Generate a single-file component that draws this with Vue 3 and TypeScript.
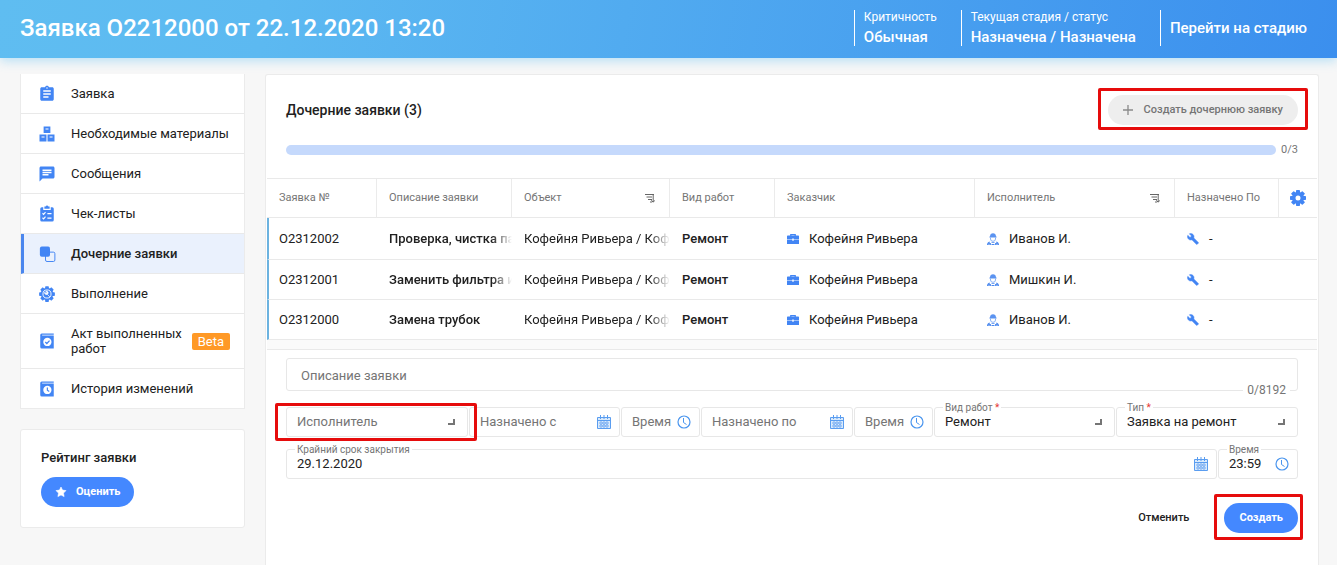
<script setup lang="ts">
import { ref } from 'vue'

type IconName =
  | 'assignment'
  | 'boxes'
  | 'chat'
  | 'checklist'
  | 'layers'
  | 'process'
  | 'act'
  | 'history'

interface MenuItem {
  icon: IconName
  label: string
  active?: boolean
  badge?: string
}

interface ChildRequest {
  number: string
  description: string
  site: string
  kind: string
  customer: string
  executor: string
  due: string
}

const menu: MenuItem[] = [
  { icon: 'assignment', label: 'Заявка' },
  { icon: 'boxes', label: 'Необходимые материалы' },
  { icon: 'chat', label: 'Сообщения' },
  { icon: 'checklist', label: 'Чек-листы' },
  { icon: 'layers', label: 'Дочерние заявки', active: true },
  { icon: 'process', label: 'Выполнение' },
  { icon: 'act', label: 'Акт выполненных работ', badge: 'Beta' },
  { icon: 'history', label: 'История изменений' },
]

const requests: ChildRequest[] = [
  { number: 'О2312002', description: 'Проверка, чистка па', site: 'Кофейня Ривьера / Коф', kind: 'Ремонт', customer: 'Кофейня Ривьера', executor: 'Иванов И.', due: '-' },
  { number: 'О2312001', description: 'Заменить фильтра и', site: 'Кофейня Ривьера / Коф', kind: 'Ремонт', customer: 'Кофейня Ривьера', executor: 'Мишкин И.', due: '-' },
  { number: 'О2312000', description: 'Замена трубок', site: 'Кофейня Ривьера / Коф', kind: 'Ремонт', customer: 'Кофейня Ривьера', executor: 'Иванов И.', due: '-' },
]

const teeth = [0, 45, 90, 135, 180, 225, 270, 315]

const description = ref('')
const executor = ref('')
const startDate = ref('')
const startTime = ref('')
const endDate = ref('')
const endTime = ref('')
const workKind = ref('Ремонт')
const requestType = ref('Заявка на ремонт')
const deadlineDate = ref('29.12.2020')
const deadlineTime = ref('23:59')
</script>

<template>
  <svg class="sprite" aria-hidden="true">
    <symbol id="calendar" viewBox="0 0 14 14">
      <path d="M.5 2.500h13v11H.5z" fill="#d9eafc" stroke="#5a9df0" />
      <path d="M1 5.500h12M3.500 0v4M7 0v4M10.500 0v4" stroke="#5a9df0" fill="none" />
      <path d="M3 7h2v2H3zM6 7h2v2H6zM9 7h2v2H9zM3 10h2v2H3zM6 10h2v2H6zM9 10h2v2H9z" fill="#fff" stroke="#5a9df0" stroke-width=".8" />
    </symbol>
    <symbol id="clock" viewBox="0 0 14 14">
      <circle cx="7" cy="7" r="6" fill="none" stroke="#4a95ee" stroke-width="1.200" />
      <path d="M6.500 3v4.500l3 2" fill="none" stroke="#4a95ee" />
    </symbol>
    <symbol id="sort" viewBox="0 0 10 10">
      <path d="M0 1.500h9M1.500 4h5.500M3 6.500h4M5 9h2M8.200 1.500V9M6.300 7.300L8.200 9.200l1.700-1.900" fill="none" stroke="#666" />
    </symbol>
    <symbol id="briefcase" viewBox="0 0 12 10">
      <path d="M3.800 2V.7h4.400V2" fill="none" stroke="#4285f4" stroke-width="1.300" />
      <path d="M.7 1.500h10.600q.7 0 .7.700V5.400H6.700V4.600H5.300v.8H0V2.200Q0 1.500.7 1.500zM0 6h5.300v.8h1.400V6H12v4H0z" fill="#4285f4" />
    </symbol>
    <symbol id="worker" viewBox="0 0 12 12">
      <path d="M3 3.500C3 1.300 4.300.2 6 .2s3 1.100 3 3.300h.6v1H2.400v-1z" fill="#5b93f0" />
      <path d="M3.500 4.500V6q0 2.300 2.500 2.300T8.500 6V4.500" fill="none" stroke="#7ba9f4" stroke-width=".9" />
      <path d="M0 12q0-3 2.700-3.500V10h1.200v2H2.300v-1.200h-.6V12zM12 12q0-3-2.700-3.500V10H8.100v2h1.600v-1.200h.6V12zM4.500 9.200h3V10h-3zM4.500 11h3v1h-3z" fill="#4a88ee" />
    </symbol>
    <symbol id="wrench" viewBox="0 0 24 24">
      <path fill="#4285f4" stroke="#4285f4" d="M22.700 19l-9.100-9.100c.9-2.300.4-5-1.500-6.900-2-2-5-2.400-7.400-1.300L9 6 6 9 1.600 4.700C.4 7.100.9 10.100 2.900 12.100c1.900 1.900 4.600 2.400 6.900 1.500l9.100 9.100c.4.4 1 .4 1.400 0l2.300-2.300c.5-.4.5-1.100.1-1.400z" />
    </symbol>
  </svg>

  <div class="page">
    <header class="top">
      <h1>Заявка О2212000 от 22.12.2020 13:20</h1>
      <div class="info">
        <span>Критичность</span>
        <strong>Обычная</strong>
      </div>
      <div class="info">
        <span>Текущая стадия / статус</span>
        <strong>Назначена / Назначена</strong>
      </div>
      <div class="info last">
        <a href="#stage">Перейти на стадию</a>
      </div>
    </header>

    <div class="body">
      <aside>
        <nav class="menu">
          <a v-for="item in menu" :key="item.label" href="#" :class="{ active: item.active }">
            <svg class="nav-icon" viewBox="0 0 24 24" fill="#4285f4" aria-hidden="true">
              <path v-if="item.icon === 'assignment'" d="M19 3h-4.180C14.400 1.840 13.300 1 12 1s-2.400.84-2.820 2H5c-1.100 0-2 .9-2 2v14c0 1.100.9 2 2 2h14c1.100 0 2-.9 2-2V5c0-1.100-.9-2-2-2zm-7 0c.55 0 1 .45 1 1s-.45 1-1 1-1-.45-1-1 .45-1 1-1zm2 14H7v-2h7v2zm3-4H7v-2h10v2zm0-4H7V7h10v2z" />
              <template v-else-if="item.icon === 'boxes'">
                <path d="M7.500 2h9v8.500h-9zM2 12.500h9.300V22H2zM12.700 12.500H22V22h-9.300z" />
                <path d="M10 4.500h4V6h-4zM4.700 15.200h4v1.500h-4zM15.400 15.200h4v1.500h-4z" fill="#fff" />
              </template>
              <path v-else-if="item.icon === 'chat'" d="M20 2H4c-1.100 0-1.990.9-1.990 2L2 22l4-4h14c1.100 0 2-.9 2-2V4c0-1.100-.9-2-2-2zM6 9h12v2H6V9zm8 5H6v-2h8v2zm4-6H6V6h12v2z" />
              <template v-else-if="item.icon === 'checklist'">
                <path d="M5 3h2v3.500h10V3h2q2 0 2 2v15q0 2-2 2H5q-2 0-2-2V5q0-2 2-2zM8.500 2h1.700q.4-1.500 1.800-1.500T13.800 2h1.700v3h-7z" />
                <path d="M6 11l1.500 1.500L10 9.500M6 17l1.500 1.500 2.500-3M12.500 11.500H18M12.500 17.500H18" fill="none" stroke="#fff" stroke-width="1.500" />
              </template>
              <template v-else-if="item.icon === 'layers'">
                <rect x="10" y="9.500" width="12.500" height="12.500" rx="2" fill="none" stroke="#4285f4" stroke-width="1.300" />
                <rect x="2.500" y="2" width="13.500" height="13.500" rx="2.500" />
              </template>
              <template v-else-if="item.icon === 'process'">
                <rect v-for="a in teeth" :key="a" x="9.500" y="1.500" width="5" height="5" rx="1" :transform="`rotate(${a} 12 12)`" />
                <circle cx="12" cy="12" r="8.300" />
                <circle cx="12" cy="12" r="5.400" fill="none" stroke="#fff" stroke-width="1.200" />
                <path d="M15.800 15.800l-3.400-3.400M9 9.600l1.700 1.700 1.300-1.300-1.600-1.600q2.200-.6 3 1.200.4 1.400-.5 2.300-1.400 1-2.900.5-1.500-1-1-2.800z" fill="#fff" stroke="#fff" stroke-width="1" />
              </template>
              <template v-else>
                <path d="M5 2h16v1.500H5.500v1.200H21V22H5q-2 0-2-2V4q0-2 2-2z" />
                <circle cx="12.500" cy="13.300" r="5.500" fill="#fff" />
                <path v-if="item.icon === 'act'" d="M9.700 13.300l2.100 2.100 3.600-3.900" fill="none" stroke="#4285f4" stroke-width="1.700" />
                <path v-else d="M12.500 10v3.700l2.500 1.600" fill="none" stroke="#4285f4" stroke-width="1.600" />
              </template>
            </svg>
            <span class="nav-text">{{ item.label }}</span>
            <span v-if="item.badge" class="badge">{{ item.badge }}</span>
          </a>
        </nav>

        <section class="rating">
          <h2>Рейтинг заявки</h2>
          <button type="button" class="pill primary rate">
            <svg width="12" height="12" viewBox="0 0 12 12" aria-hidden="true">
              <path d="M6 1l1.500 3.100 3.500.5-2.500 2.500.6 3.500L6 8.900l-3.100 1.700.6-3.500L1 4.600l3.500-.5z" fill="#fff" stroke="#fff" stroke-width=".6" stroke-linejoin="round" />
            </svg>
            Оценить
          </button>
        </section>
      </aside>

      <main>
        <div class="title">
          <h2>Дочерние заявки (3)</h2>
          <div class="marked create-mark">
            <button type="button" class="pill muted" disabled>
              <svg width="10" height="10" viewBox="0 0 10 10" aria-hidden="true">
                <path d="M5 0v10M0 5h10" stroke="#8a8a8a" stroke-width="1.300" />
              </svg>
              Создать дочернюю заявку
            </button>
          </div>
        </div>

        <div class="progress">
          <div class="bar" role="progressbar" aria-label="Выполнено заявок" aria-valuenow="0" aria-valuemin="0" aria-valuemax="3"></div>
          <span>0/3</span>
        </div>

        <div class="table-wrap">
          <table>
            <colgroup>
              <col class="c-number" />
              <col class="c-description" />
              <col class="c-site" />
              <col class="c-kind" />
              <col class="c-person" />
              <col class="c-person" />
              <col class="c-due" />
              <col class="c-settings" />
            </colgroup>
            <thead>
              <tr>
                <th>Заявка №</th>
                <th>Описание заявки</th>
                <th>
                  <div class="sortable">Объект<svg width="10" height="10" aria-hidden="true"><use href="#sort" /></svg></div>
                </th>
                <th>Вид работ</th>
                <th>Заказчик</th>
                <th>
                  <div class="sortable">Исполнитель<svg width="10" height="10" aria-hidden="true"><use href="#sort" /></svg></div>
                </th>
                <th>Назначено По</th>
                <th class="settings">
                  <button type="button" aria-label="Настройки таблицы">
                    <svg width="16" height="16" viewBox="0 0 24 24" fill="#4285f4" aria-hidden="true">
                      <rect v-for="a in teeth" :key="a" x="9" y="0" width="6" height="6" rx="1" :transform="`rotate(${a} 12 12)`" />
                      <circle cx="12" cy="12" r="6.500" fill="none" stroke="#4285f4" stroke-width="5.500" />
                    </svg>
                  </button>
                </th>
              </tr>
            </thead>
            <tbody>
              <tr v-for="r in requests" :key="r.number">
                <td>{{ r.number }}</td>
                <td class="strong"><div class="fade">{{ r.description }}</div></td>
                <td><div class="fade">{{ r.site }}</div></td>
                <td class="strong">{{ r.kind }}</td>
                <td>
                  <div class="with-icon"><svg width="12" height="10" aria-hidden="true"><use href="#briefcase" /></svg>{{ r.customer }}</div>
                </td>
                <td>
                  <div class="with-icon"><svg width="12" height="12" aria-hidden="true"><use href="#worker" /></svg>{{ r.executor }}</div>
                </td>
                <td>
                  <div class="with-icon"><svg width="12" height="12" aria-hidden="true"><use href="#wrench" /></svg>{{ r.due }}</div>
                </td>
                <td></td>
              </tr>
            </tbody>
          </table>
        </div>

        <form @submit.prevent>
          <div class="field area">
            <textarea v-model="description" rows="1" maxlength="8192" placeholder="Описание заявки" aria-label="Описание заявки"></textarea>
            <span class="counter">{{ description.length }}/8192</span>
          </div>

          <div class="row plan">
            <div class="field choice marked executor-mark">
              <select v-model="executor" class="empty" aria-label="Исполнитель">
                <option value="">Исполнитель</option>
                <option>Иванов И.</option>
                <option>Мишкин И.</option>
              </select>
              <i class="corner"></i>
            </div>
            <div class="field">
              <input v-model="startDate" type="text" placeholder="Назначено с" aria-label="Назначено с" />
              <svg width="14" height="14" aria-hidden="true"><use href="#calendar" /></svg>
            </div>
            <div class="field">
              <input v-model="startTime" type="text" placeholder="Время" aria-label="Время начала" />
              <svg width="14" height="14" aria-hidden="true"><use href="#clock" /></svg>
            </div>
            <div class="field">
              <input v-model="endDate" type="text" placeholder="Назначено по" aria-label="Назначено по" />
              <svg width="14" height="14" aria-hidden="true"><use href="#calendar" /></svg>
            </div>
            <div class="field">
              <input v-model="endTime" type="text" placeholder="Время" aria-label="Время окончания" />
              <svg width="14" height="14" aria-hidden="true"><use href="#clock" /></svg>
            </div>
            <div class="field choice">
              <label for="work-kind">Вид работ <b>*</b></label>
              <select id="work-kind" v-model="workKind">
                <option>Ремонт</option>
              </select>
              <i class="corner"></i>
            </div>
            <div class="field choice">
              <label for="request-type">Тип <b>*</b></label>
              <select id="request-type" v-model="requestType">
                <option>Заявка на ремонт</option>
              </select>
              <i class="corner"></i>
            </div>
          </div>

          <div class="row deadline">
            <div class="field">
              <label for="deadline-date">Крайний срок закрытия</label>
              <input id="deadline-date" v-model="deadlineDate" type="text" />
              <svg width="14" height="14" aria-hidden="true"><use href="#calendar" /></svg>
            </div>
            <div class="field">
              <label for="deadline-time">Время</label>
              <input id="deadline-time" v-model="deadlineTime" type="text" />
              <svg width="14" height="14" aria-hidden="true"><use href="#clock" /></svg>
            </div>
          </div>

          <div class="actions">
            <button type="button" class="cancel">Отменить</button>
            <div class="marked submit-mark">
              <button type="submit" class="pill primary">Создать</button>
            </div>
          </div>
        </form>
      </main>
    </div>
  </div>
</template>

<style>
body {
  margin: 0;
  background: #f7f7f7;
}
</style>

<style scoped>
* {
  box-sizing: border-box;
}

.sprite {
  position: absolute;
  width: 0;
  height: 0;
}

.page {
  height: 100vh;
  display: flex;
  flex-direction: column;
  overflow: hidden;
  color: #212121;
  font: 13px/16px Roboto, sans-serif;
}

button,
input,
select,
textarea {
  font: inherit;
  color: inherit;
  background: none;
  border: 0;
  margin: 0;
  padding: 0;
  outline: 0;
}

h1,
h2 {
  margin: 0;
  font-weight: 500;
}

svg {
  flex: none;
  display: block;
}

.top {
  flex: none;
  display: flex;
  align-items: center;
  height: 58px;
  padding: 0 30px 2px 20px;
  color: #fff;
  background: linear-gradient(100deg, #5fbdf1 0%, #5cb9f1 20%, #3b8fee 100%);
  box-shadow: 0 3px 10px rgba(91, 190, 243, 0.4);
}

.top h1 {
  flex: 1;
  font-size: 24px;
  line-height: 28px;
}

.info {
  display: flex;
  flex-direction: column;
  justify-content: center;
  gap: 2px;
  height: 36px;
  padding: 0 24px 0 9px;
  border-left: 1px solid #fff;
  font-size: 12px;
  line-height: 16px;
}

.info.last {
  padding-right: 0;
}

.info strong,
.info a {
  color: #fff;
  font-size: 15px;
  line-height: 20px;
  font-weight: 500;
  text-decoration: none;
}

.body {
  flex: 1;
  min-height: 0;
  display: flex;
  align-items: stretch;
  gap: 20px;
  padding: 16px 18px 0 20px;
}

aside {
  flex: none;
  width: 225px;
}

.menu {
  border: 1px solid #ebebeb;
  border-top: 0;
  background: #fff;
}

.menu a {
  display: flex;
  align-items: center;
  gap: 15px;
  min-height: 40px;
  padding: 4px 14px 4px 17px;
  border-bottom: 1px solid #e9e9e9;
  color: #212121;
  line-height: 15px;
  text-decoration: none;
}

.menu a:nth-child(7) {
  min-height: 55px;
}

.menu a:last-child {
  min-height: 39px;
  border-bottom: 0;
}

.menu a.active {
  padding-left: 14px;
  border-left: 3px solid #4a86ee;
  background: #eaf1fd;
  font-weight: 500;
}

.nav-icon {
  width: 18px;
  height: 18px;
}

.nav-text {
  flex: 1;
}

.badge {
  margin-left: -10px;
  padding: 0 6px;
  border-radius: 2px;
  background: #ff9926;
  color: #fff;
  line-height: 17px;
}

.rating {
  margin-top: 20px;
  padding: 20px;
  border: 1px solid #ebebeb;
  border-radius: 3px;
  background: #fff;
}

.rating h2 {
  margin-bottom: 11px;
  font-size: 13px;
  line-height: 16px;
}

.pill {
  display: flex;
  align-items: center;
  height: 30px;
  padding: 0 15px;
  border-radius: 15px;
  font-size: 11px;
  font-weight: 500;
  white-space: nowrap;
}

.primary {
  background: #4488ff;
  color: #fff;
  font-weight: 700;
}

.rate {
  gap: 9px;
  padding: 0 14px;
}

.muted {
  gap: 11px;
  background: #eee;
  color: #757575;
}

main {
  flex: 1;
  min-width: 0;
  border: 1px solid #ebebeb;
  border-bottom: 0;
  border-radius: 3px 3px 0 0;
  background: #fff;
}

.title {
  display: flex;
  align-items: center;
  justify-content: space-between;
  padding: 20px 20px 0;
}

.title h2 {
  font-size: 14px;
  line-height: 20px;
}

.marked {
  position: relative;
}

.marked::after {
  content: '';
  position: absolute;
  z-index: 1;
  inset: -7px -10px -5px;
  border: 3px solid #e60c0c;
  border-radius: 2px;
  pointer-events: none;
}

.progress {
  display: flex;
  align-items: center;
  gap: 5px;
  height: 16px;
  margin: 17px 20px 0;
  color: #757575;
  font-size: 11px;
}

.bar {
  flex: 1;
  height: 10px;
  border-radius: 5px;
  background: #c5d9fc;
}

.table-wrap {
  margin: 20px 1px 0;
  padding-bottom: 9px;
  border-bottom: 1px solid #e9e9e9;
  background: #fafafa;
}

table {
  width: 100%;
  table-layout: fixed;
  border-collapse: separate;
  border-spacing: 0;
  border-top: 1px solid #e9e9e9;
  background: #fff;
}

.c-number { width: 110px; }
.c-description { width: 135px; }
.c-site { width: 158px; }
.c-kind { width: 105px; }
.c-person { width: 200px; }
.c-due { width: 104px; }
.c-settings { width: 38px; }

th,
td {
  height: 40px;
  padding: 0 0 0 12px;
  border-bottom: 1px solid #e9e9e9;
  text-align: left;
  white-space: nowrap;
}

th {
  height: 39px;
  border-right: 1px solid #ebebeb;
  color: #757575;
  font-size: 11px;
  font-weight: 400;
}

th:last-child {
  border-right: 0;
}

td:first-child {
  padding-left: 10px;
  border-left: 2px solid #6cb3e0;
}

tbody tr:first-child td {
  height: 42px;
}

.strong {
  font-weight: 500;
}

.fade {
  overflow: hidden;
  mask-image: linear-gradient(to right, #000 calc(100% - 20px), transparent);
}

.sortable {
  display: flex;
  align-items: center;
  justify-content: space-between;
  padding-right: 14px;
}

.with-icon {
  display: flex;
  align-items: center;
  gap: 10px;
}

.settings {
  padding: 0;
}

.settings button {
  display: flex;
  margin: 0 auto;
}

form {
  padding: 8px 20px;
}

.field {
  position: relative;
  display: flex;
  align-items: center;
  height: 30px;
  min-width: 0;
  padding: 0 8px 0 10px;
  border: 1px solid #e7e7e7;
  border-radius: 3px;
}

.field.choice {
  padding-right: 12px;
}

.field.area {
  height: 33px;
  padding: 2px 14px 0;
}

.field input,
.field select,
.field textarea {
  flex: 1;
  min-width: 0;
  width: 0;
  height: 20px;
  line-height: 20px;
  appearance: none;
  resize: none;
  overflow: hidden;
}

.field ::placeholder,
.field select.empty {
  color: #757575;
  opacity: 1;
}

.field label,
.counter {
  position: absolute;
  background: #fff;
  color: #757575;
}

.field label {
  top: -6px;
  left: 8px;
  padding: 0 2px;
  font-size: 10px;
  line-height: 12px;
}

.field label b {
  color: #e53935;
  font-weight: 400;
}

.counter {
  right: 7px;
  bottom: -8px;
  padding: 0 4px;
  font-size: 12px;
  line-height: 16px;
}

.corner {
  flex: none;
  width: 7px;
  height: 6px;
  border: solid #757575;
  border-width: 0 2px 2px 0;
}

.row {
  display: grid;
  gap: 1px;
}

.plan {
  grid-template-columns: 182fr 151fr 79px 152fr 79px 181fr 182fr;
  margin-top: 16px;
}

.deadline {
  grid-template-columns: 1fr 80px;
  margin-top: 12px;
}

.executor-mark::after {
  inset: -5px -10px -5px -12px;
}

.actions {
  display: flex;
  align-items: center;
  justify-content: flex-end;
  gap: 35px;
  margin-top: 24px;
}

.cancel {
  font-size: 11px;
  font-weight: 500;
}

.submit-mark::after {
  inset: -9px -5px -7px -10px;
}
</style>
